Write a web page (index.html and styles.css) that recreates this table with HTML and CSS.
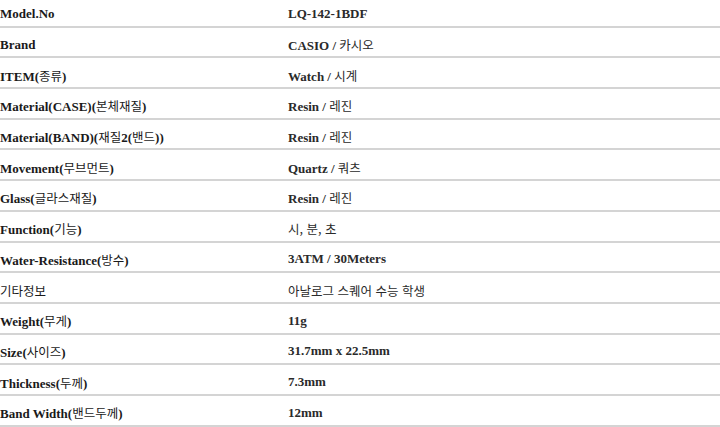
FILE: index.html
```html
<!DOCTYPE html>
<html lang="ko">
<head>
<meta charset="utf-8">
<link rel="stylesheet" href="styles.css">
</head>
<body>
<div class="spec">
  <div class="row"><div class="k">Model.No</div><div class="v">LQ-142-1BDF</div></div>
  <div class="row"><div class="k">Brand</div><div class="v">CASIO / <span class="ko">카시오</span></div></div>
  <div class="row"><div class="k">ITEM(<span class="ko">종류</span>)</div><div class="v">Watch / <span class="ko">시계</span></div></div>
  <div class="row"><div class="k">Material(CASE)(<span class="ko">본체재질</span>)</div><div class="v">Resin / <span class="ko">레진</span></div></div>
  <div class="row"><div class="k">Material(BAND)(<span class="ko">재질</span>2(<span class="ko">밴드</span>))</div><div class="v">Resin / <span class="ko">레진</span></div></div>
  <div class="row"><div class="k">Movement(<span class="ko">무브먼트</span>)</div><div class="v">Quartz / <span class="ko">쿼츠</span></div></div>
  <div class="row"><div class="k">Glass(<span class="ko">글라스재질</span>)</div><div class="v">Resin / <span class="ko">레진</span></div></div>
  <div class="row"><div class="k">Function(<span class="ko">기능</span>)</div><div class="v"><span class="ko">시, 분, 초</span></div></div>
  <div class="row"><div class="k">Water-Resistance(<span class="ko">방수</span>)</div><div class="v">3ATM / 30Meters</div></div>
  <div class="row"><div class="k"><span class="ko">기타정보</span></div><div class="v"><span class="ko">아날로그 스퀘어 수능 학생</span></div></div>
  <div class="row"><div class="k">Weight(<span class="ko">무게</span>)</div><div class="v">11g</div></div>
  <div class="row"><div class="k">Size(<span class="ko">사이즈</span>)</div><div class="v">31.7mm x 22.5mm</div></div>
  <div class="row"><div class="k">Thickness(<span class="ko">두께</span>)</div><div class="v">7.3mm</div></div>
  <div class="row"><div class="k">Band Width(<span class="ko">밴드두께</span>)</div><div class="v">12mm</div></div>
</div>
</body>
</html>
```
FILE: styles.css
```css
html, body {
  margin: 0;
  padding: 0;
  background: #fff;
  overflow: hidden;
}
.spec {
  margin-top: -3px;
  font-family: "Liberation Serif", "Noto Sans CJK KR", serif;
  font-size: 13px;
  font-weight: bold;
  color: #1a1a1a;
}
.row {
  box-sizing: border-box;
  display: grid;
  grid-template-columns: 288px 1fr;
  align-items: center;
  height: 30.7px;
  padding-top: 5px;
  border-bottom: 2px solid #d4d4d4;
}
.ko {
  font-family: "Noto Sans CJK KR", sans-serif;
  font-weight: normal;
  font-size: 12.5px;
}
.v {
  color: #2a2a2a;
}
```
